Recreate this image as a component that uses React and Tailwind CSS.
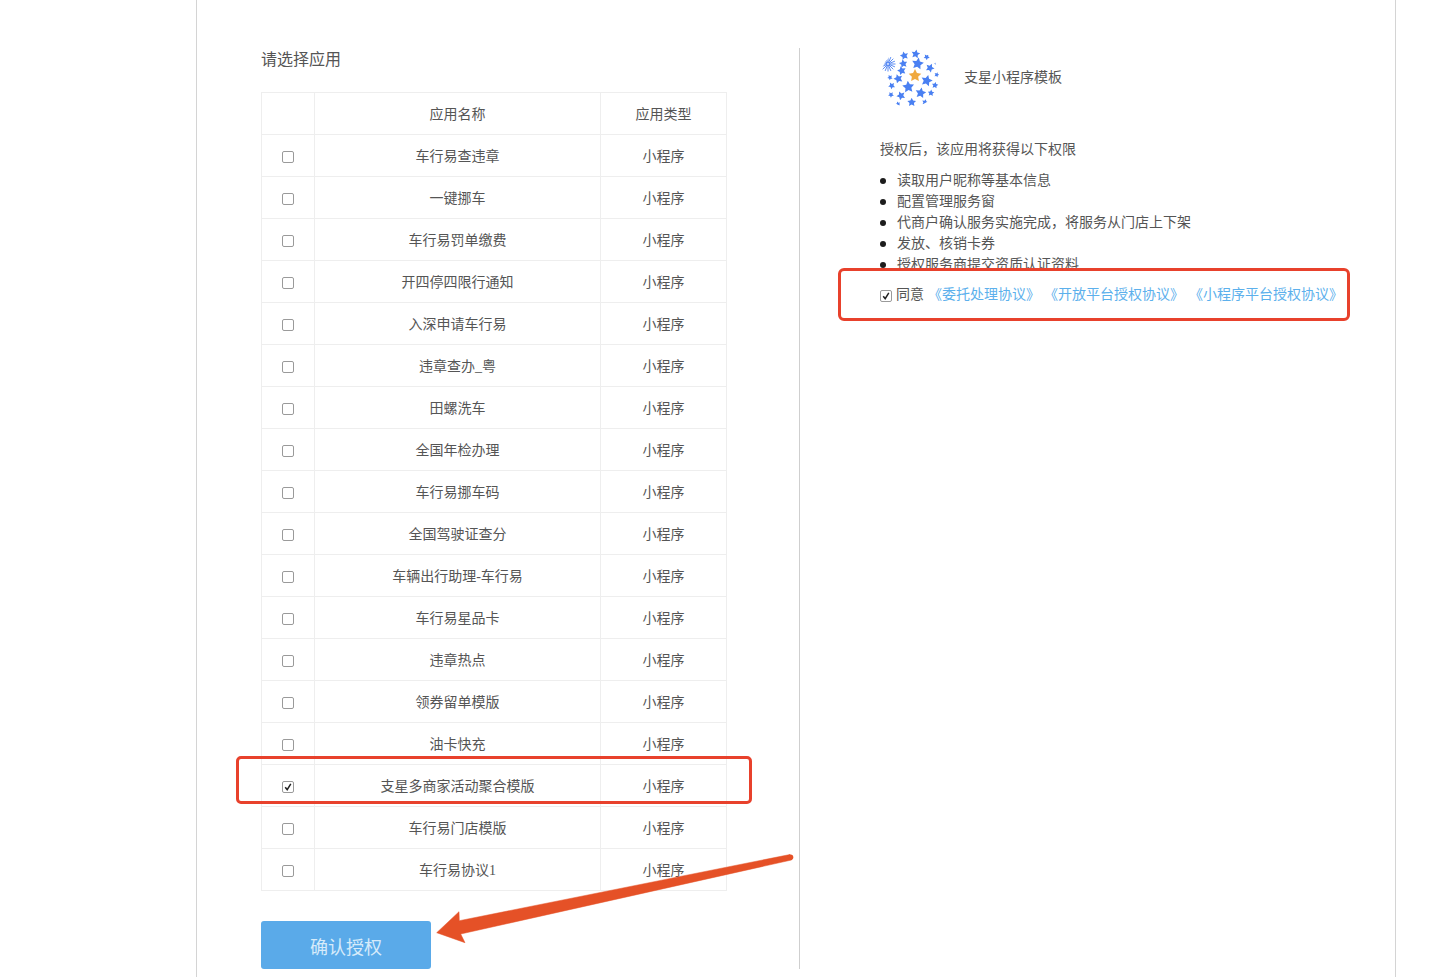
const apps = [
  '车行易查违章', '一键挪车', '车行易罚单缴费', '开四停四限行通知', '入深申请车行易', '违章查办_粤',
  '田螺洗车', '全国年检办理', '车行易挪车码', '全国驾驶证查分', '车辆出行助理-车行易', '车行易星品卡',
  '违章热点', '领券留单模版', '油卡快充', '支星多商家活动聚合模版', '车行易门店模版', '车行易协议1',
];

const perms = ['读取用户昵称等基本信息', '配置管理服务窗', '代商户确认服务实施完成，将服务从门店上下架', '发放、核销卡券', '授权服务商提交资质认证资料'];

// x, y, radius, rotation of the blue stars on the logo
const stars = [
  [37.7, 15.7, 6.2, 10], [35.7, 6, 4.6, 10], [24.3, 7.7, 4.4, -15], [23.3, 15.7, 4.4, -10], [21.7, 22.7, 4.6, -15],
  [18.3, 30.7, 4.8, -20], [28.3, 39, 6.2, -5], [46.7, 32.7, 6, 15], [50, 20, 4.6, 25], [55, 37.3, 3.4, 10],
  [40.7, 45, 5.6, 10], [51, 45, 3.4, 5], [31.7, 54.3, 4.6, 0], [21, 47.7, 4.6, -25], [11.7, 37.7, 3.6, -30],
  [10, 29.5, 2.8, -30], [45, 54.3, 3.2, 15], [11, 46.7, 3, -35], [46.7, 9, 3.2, 35], [56.7, 26.7, 2.6, 20],
  [18, 56, 2.6, -20], [56, 15, 2, 40],
];

const starPoints = (cx, cy, r, rot) => {
  const pts = [];
  for (let i = 0; i < 10; i++) {
    const rad = i % 2 === 0 ? r : r * 0.5;
    const a = ((rot + i * 36 - 90) * Math.PI) / 180;
    pts.push(`${(cx + rad * Math.cos(a)).toFixed(2)},${(cy + rad * Math.sin(a)).toFixed(2)}`);
  }
  return pts.join(' ');
};

const Logo = () => (
  <svg width="60" height="60" viewBox="0 0 60 60" className="shrink-0">
    <defs>
      <clipPath id="ball">
        <circle cx="30" cy="30" r="29.5" />
      </clipPath>
    </defs>
    <g clipPath="url(#ball)">
      {stars.map((s, i) => (
        <polygon key={i} points={starPoints(s[0], s[1], s[2], s[3])} fill="#4a80f2" />
      ))}
      {[...Array(16)].map((_, i) => {
        const a = (i * 2 * Math.PI) / 16;
        return (
          <line
            key={i}
            x1={8 + 1 * Math.cos(a)}
            y1={16 + 1 * Math.sin(a)}
            x2={8 + 7.5 * Math.cos(a)}
            y2={16 + 7.5 * Math.sin(a)}
            stroke="#4a80f2"
            strokeWidth="0.9"
          />
        );
      })}
      <polygon points={starPoints(35, 27.7, 6.6, 0)} fill="#f0a93e" />
    </g>
  </svg>
);

const Checkbox = ({ checked }) => (
  <span className="inline-flex h-[12px] w-[12px] shrink-0 items-center justify-center rounded-[2px] border border-[#9a9a9a] bg-white">
    {checked && (
      <svg width="10" height="10" viewBox="0 0 10 10">
        <path d="M2.2 5.2 L4.2 7.6 L7.8 1.8" fill="none" stroke="#222" strokeWidth="1.5" />
      </svg>
    )}
  </span>
);

const App = () => {
  return (
    <div className="relative h-[977px] overflow-hidden bg-white font-['Liberation_Serif','Noto_Sans_CJK_SC',serif] text-sm text-[#555]">
      <div className="ml-[196px] flex h-[977px] w-[1200px] border-x border-[#d4d4d4] pt-12">
        {/* Left: app table */}
        <div className="h-[921px] w-[603px] shrink-0 border-r border-[#cfcfcf] pl-16">
          <h2 className="mb-5 h-6 text-base leading-[23px] font-normal text-[#555]">请选择应用</h2>
          <table className="w-[465px] table-fixed border-collapse">
            <colgroup>
              <col className="w-[53px]" />
              <col className="w-[286px]" />
              <col className="w-[126px]" />
            </colgroup>
            <thead>
              <tr className="h-[42px]">
                <th className="border border-[#eee] font-normal"></th>
                <th className="border border-[#eee] pt-0.5 text-center font-normal">应用名称</th>
                <th className="border border-[#eee] pt-0.5 text-center font-normal">应用类型</th>
              </tr>
            </thead>
            <tbody>
              {apps.map((name, i) => (
                <tr key={name} className="h-[42px]">
                  <td className="border border-[#eee] p-0">
                    <div className="flex justify-center pt-[2px] pr-px">
                      <Checkbox checked={i === 15} />
                    </div>
                  </td>
                  <td className="border border-[#eee] pt-0.5 text-center">{name}</td>
                  <td className="border border-[#eee] pt-0.5 text-center">小程序</td>
                </tr>
              ))}
            </tbody>
          </table>
          <button className="mt-[30px] h-12 w-[170px] rounded-[3px] bg-[#5aaae9] pt-[6px] text-lg text-[#d6ebfa]">确认授权</button>
        </div>

        {/* Right: permissions */}
        <div className="flex-1 pl-20">
          <div className="flex h-[60px] items-center gap-6">
            <Logo />
            <span>支星小程序模板</span>
          </div>
          <p className="mt-[31px] h-[21px] leading-[21px]">授权后，该应用将获得以下权限</p>
          <div className="mt-[10px] h-[98px] overflow-hidden">
            <ul>
              {perms.map((p) => (
                <li key={p} className="flex h-[21px] items-center gap-[11px] leading-[21px] text-[#555]">
                  <span className="h-[6px] w-[6px] rounded-full bg-[#1c1c1c]"></span>
                  {p}
                </li>
              ))}
            </ul>
          </div>
          <div className="-ml-[42px] flex h-[53px] w-[512px] items-center rounded-[6px] border-[3px] border-[#e8412c] bg-white pl-[39px] whitespace-nowrap">
            <span className="flex pt-0.5">
              <Checkbox checked />
            </span>
            <span className="ml-1">同意</span>
            <a className="ml-1 text-[#5cb0ec]">《委托处理协议》</a>
            <a className="ml-1 text-[#5cb0ec]">《开放平台授权协议》</a>
            <a className="ml-[5px] text-[#5cb0ec]">《小程序平台授权协议》</a>
          </div>
        </div>
      </div>

      {/* Annotations drawn over the screenshot */}
      <div className="absolute top-[756px] left-[236px] h-[48px] w-[516px] rounded-[5px] border-[3px] border-[#e8412c]"></div>
      <svg className="absolute top-[850px] left-[430px]" width="370" height="100" viewBox="430 850 370 100">
        <polygon
          points="790,854.5 459.3,920.7 459,911.7 436.7,932.7 465,942.7 460.7,934 791.5,860"
          fill="#e55127"
          stroke="#e55127"
          strokeWidth="0.5"
          strokeLinejoin="round"
        />
        <circle cx="790.5" cy="857.3" r="2.8" fill="#e55127" />
      </svg>
    </div>
  );
};

export default App;
